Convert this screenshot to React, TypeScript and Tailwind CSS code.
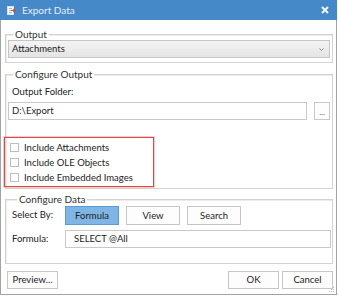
import { useState } from "react";

const FONT = "font-['Lato',_'Noto_Sans',_sans-serif]";

function Group({ title, className, children }: { title: string; className?: string; children: React.ReactNode }) {
  return (
    <fieldset className={`border border-[#d3d3d3] shadow-[inset_1px_1px_0_#ececec] ${className ?? ""}`}>
      <legend className="ml-[5px] whitespace-nowrap bg-white px-[2px] text-[10px] leading-[12px] text-[#333]">{title}</legend>
      {children}
    </fieldset>
  );
}

function Btn({ label, active, className }: { label: string; active?: boolean; className?: string }) {
  return (
    <button
      className={`flex h-[18px] items-center justify-center whitespace-nowrap border text-[9.5px] leading-none text-[#222] ${
        active ? "border-[#5d9bd4] bg-[#7fb5e5]" : "border-[#c6c6c6] bg-[#fdfdfd]"
      } ${className ?? ""}`}
    >
      {label}
    </button>
  );
}

function Check({ label }: { label: string }) {
  const [on, setOn] = useState(false);
  return (
    <label className="flex h-[15px] items-center gap-[5px] pl-[5px]" onClick={() => setOn(!on)}>
      <span className="h-[9px] w-[9px] shrink-0 border border-[#bdbdbd] bg-white" />
      <span className="whitespace-nowrap text-[9.5px] leading-none text-[#222]">{label}</span>
    </label>
  );
}

export default function App() {
  return (
    <div className={`h-[296px] w-[338px] bg-white ${FONT}`}>
      <div className="relative flex h-[295px] w-[337px] flex-col border border-t-0 border-[#a3a3a3] bg-white">
        {/* title bar */}
        <div className="-mx-px flex h-[20px] items-center bg-[#4689c9] pl-[7px] pr-[7px]">
          <svg width="9" height="9" viewBox="0 0 9 9">
            <rect x="0.5" y="0.5" width="6" height="8" fill="#fff" stroke="#d8e3ee" />
            <path d="M2 2.5h3M2 4.5h3M2 6.5h3" stroke="#8aa" strokeWidth="0.8" />
            <path d="M4 4.5h4M6.5 3l1.7 1.5L6.5 6" fill="none" stroke="#e03a3a" strokeWidth="1.2" />
          </svg>
          <span className="ml-[6px] text-[10px] text-[#e6eef7]">Export Data</span>
          <svg className="ml-auto mr-[1px]" width="8" height="8" viewBox="0 0 8 8">
            <path d="M1 1l6 6M7 1l-6 6" stroke="#f4f8fc" strokeWidth="2" />
          </svg>
        </div>

        <div className="flex flex-1 flex-col pl-[4px] pr-[3px]">
          <Group title="Output" className="mt-[8px] px-[2px] pb-[4px]">
            <div className="flex h-[18px] items-center border border-[#c5c5c5] bg-gradient-to-b from-[#f4f4f4] to-[#e4e4e4] pl-[3px] pr-[5px]">
              <span className="text-[9.5px] leading-none text-[#222]">Attachments</span>
              <svg className="ml-auto" width="5" height="3" viewBox="0 0 5 3">
                <path d="M0.5 0.5L2.5 2.5l2-2" fill="none" stroke="#888" />
              </svg>
            </div>
          </Group>

          <Group title="Configure Output" className="mt-[5px] px-[2px] pb-[1px]">
            <div className="pl-[4px] pt-[5px] text-[9.5px] leading-[14px] text-[#222]">Output Folder:</div>
            <div className="mt-[3px] flex gap-[7px]">
              <div className="flex h-[18px] w-[299px] items-center border border-[#c8c8c8] pl-[3px] text-[9.5px] text-[#222]">
                D:\Export
              </div>
              <button className="flex h-[18px] w-[16px] items-end justify-center border border-[#c8c8c8] bg-[#fdfdfd] pb-[3px] text-[8px] leading-none text-[#555]">
                ...
              </button>
            </div>
            <div className="-ml-[4px] mt-[17px] flex w-[150px] flex-col border border-[#e24848] pb-[1px] pt-[2px] shadow-[0_0_0_0.5px_#f29090]">
              <Check label="Include Attachments" />
              <Check label="Include OLE Objects" />
              <Check label="Include Embedded Images" />
            </div>
          </Group>

          <Group title="Configure Data" className="mt-[4px] pb-[15px] pl-[6px] pr-[1px]">
            <div className="mt-[1px] flex h-[19px] items-center">
              <span className="w-[53px] text-[9.5px] text-[#222]">Select By:</span>
              <div className="flex gap-[7px]">
                <Btn label="Formula" active className="h-[19px] w-[54px]" />
                <Btn label="View" className="h-[19px] w-[54px]" />
                <Btn label="Search" className="h-[19px] w-[54px]" />
              </div>
            </div>
            <div className="mt-[5px] flex items-center">
              <span className="w-[53px] text-[9.5px] text-[#222]">Formula:</span>
              <div className="flex h-[18px] flex-1 items-center border border-[#c8c8c8] pl-[8px] text-[9.5px] text-[#222]">
                SELECT @All
              </div>
            </div>
          </Group>

          <div className="mt-[7px] flex items-center pl-[2px] pr-[0px]">
            <Btn label="Preview..." className="w-[51px]" />
            <Btn label="OK" className="ml-auto w-[51px]" />
            <Btn label="Cancel" className="ml-[3px] w-[51px]" />
          </div>
        </div>

        <svg className="absolute bottom-[1px] right-[1px]" width="6" height="6" viewBox="0 0 6 6">
          <rect x="4" y="0" width="1" height="1" fill="#bbb" />
          <rect x="2" y="2" width="1" height="1" fill="#bbb" />
          <rect x="4" y="2" width="1" height="1" fill="#bbb" />
          <rect x="0" y="4" width="1" height="1" fill="#bbb" />
          <rect x="2" y="4" width="1" height="1" fill="#bbb" />
          <rect x="4" y="4" width="1" height="1" fill="#bbb" />
        </svg>
      </div>
    </div>
  );
}
